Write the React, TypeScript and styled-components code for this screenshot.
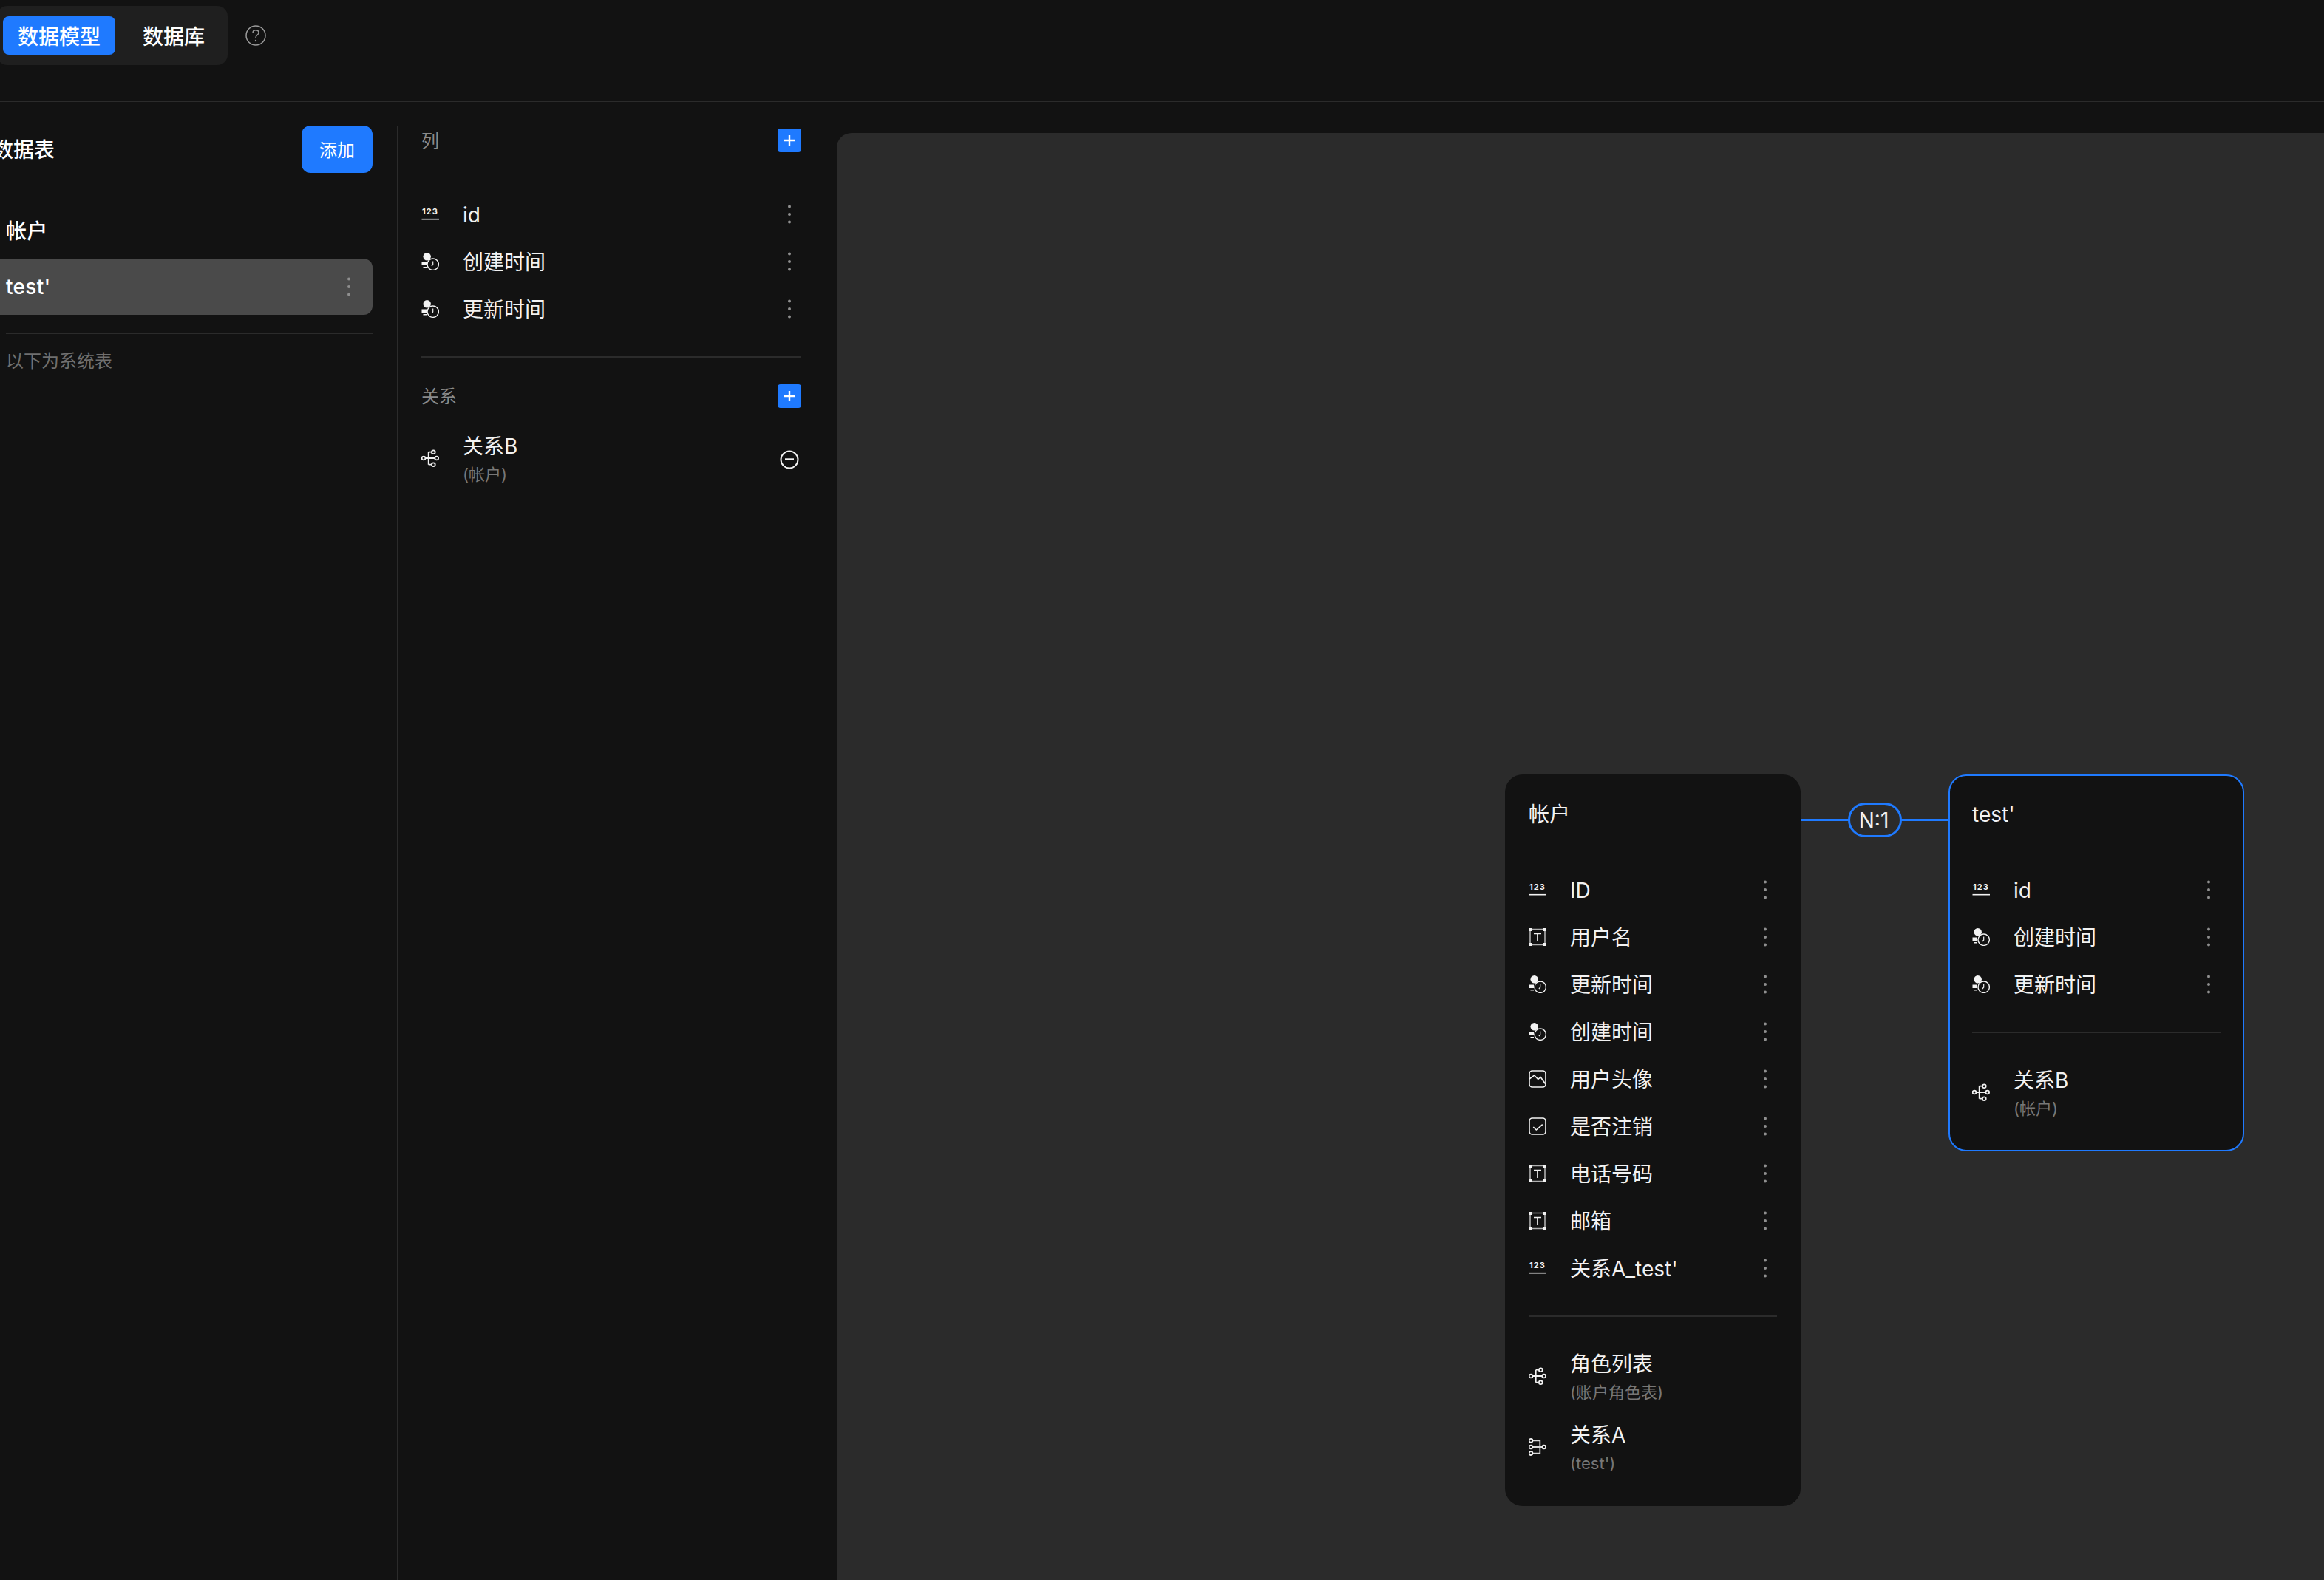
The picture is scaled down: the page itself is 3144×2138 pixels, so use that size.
import React from 'react';
import styled, { createGlobalStyle } from 'styled-components';

const Global = createGlobalStyle`
  html, body { margin: 0; padding: 0; background: #121212; overflow: hidden; }
  * { box-sizing: border-box; }
  body { font-family: Inter, "Noto Sans CJK SC", sans-serif; color: #f2f2f2; }
`;

const Page = styled.div`
  width: 3144px; height: 2138px; overflow: hidden; background: #121212;
  display: flex; flex-direction: column;
`;
const Header = styled.header`
  height: 138px; flex: none; border-bottom: 2px solid #2b2b2b;
  display: flex; align-items: flex-start; padding-top: 8px;
`;
const TabGroup = styled.div`
  margin-left: -4px; width: 312px; height: 80px; padding: 14px 8px;
  background: #1f1f1f; border-radius: 14px; display: flex; align-items: stretch; gap: 37px;
`;
const Tab = styled.div<{ $active?: boolean }>`
  display: flex; align-items: center; justify-content: center;
  font-size: 28px; font-weight: 500; color: #fff; border-radius: 8px;
  width: ${p => (p.$active ? '152px' : 'auto')};
  background: ${p => (p.$active ? '#1f7aff' : 'transparent')};
`;
const HelpWrap = styled.div`
  margin: 26px 0 0 24px; width: 28px; height: 28px; color: #9a9a9a;
`;
const Body = styled.div`flex: 1; display: flex; min-height: 0;`;
const Sidebar = styled.aside`
  width: 555px; flex: none; margin-left: -16px; margin-top: 32px; padding-right: 33px;
  border-right: 2px solid #2b2b2b;
`;
const SideHead = styled.div`
  display: flex; justify-content: space-between; align-items: center; padding-left: 6px; height: 64px;
  font-size: 28px; font-weight: 500; color: #fff;
`;
const SideTitle = styled.span`margin-top: -2px;`;
const AddButton = styled.button`
  width: 96px; height: 64px; border: 0; border-radius: 12px; background: #1f7aff; color: #fff;
  font-family: inherit; font-size: 24px; font-weight: 400; padding: 0 0 2px;
`;
const TableRow = styled.div<{ $active?: boolean; $first?: boolean }>`
  height: 76px; padding: 0 29px 0 24px; border-radius: 12px; margin-top: ${p => (p.$first ? '40px' : '0')};
  display: flex; align-items: center; justify-content: space-between;
  font-size: 28px; font-weight: 500; color: #fff; letter-spacing: 0.3px;
  background: ${p => (p.$active ? '#4a4a4a' : 'transparent')};
`;
const AccountName = styled.span`margin-top: -2px;`;
const SideRule = styled.div`height: 2px; background: #2b2b2b; margin: 24px 0 0 24px;`;
const SystemNote = styled.div`margin: 20px 0 0 24px; font-size: 24px; line-height: 34px; color: #6f6f6f;`;

const ColumnPanel = styled.section`
  width: 593px; flex: none; padding: 36px 48px 0 31px;
`;
const PanelHead = styled.div`
  height: 32px; display: flex; align-items: center; justify-content: space-between;
  font-size: 24px; color: #8a8a8a;
`;
const PanelTitle = styled.span`margin-top: -3px;`;
const PlusButton = styled.div`
  width: 32px; height: 32px; background: #1f7aff; border-radius: 4px;
  display: flex; align-items: center; justify-content: center;
`;
const RowList = styled.div<{ $top: number }>`margin-top: ${p => p.$top}px;`;
const FieldRow = styled.div`
  height: 64px; display: flex; align-items: center; font-size: 28px; color: #f2f2f2;
`;
const RelationRow = styled.div`
  height: 96px; display: flex; align-items: center;
`;
const IconBox = styled.div<{ $raise?: boolean }>`
  width: 24px; height: 24px; flex: none; margin-right: 32px; color: #f2f2f2;
  margin-top: ${p => (p.$raise ? '-4px' : '0')};
  svg { display: block; }
`;
const Label = styled.div`flex: 1; min-width: 0; line-height: 36px; padding-top: 1px;`;
const RelationText = styled.div`flex: 1; min-width: 0; padding-top: 2px;`;
const RelationName = styled.div`font-size: 28px; line-height: 38px; color: #f2f2f2;`;
const RelationSub = styled.div`font-size: 22px; line-height: 38px; color: #777;`;
const EndAction = styled.div`
  width: 32px; height: 32px; flex: none; display: flex; align-items: center; justify-content: center;
`;
const Rule = styled.div<{ $top: number; $bottom: number }>`
  height: 2px; background: #2b2b2b; margin: ${p => p.$top}px 0 ${p => p.$bottom}px;
`;

const Canvas = styled.main`
  flex: 1; margin-top: 42px; background: #2b2b2b; border-top-left-radius: 20px; position: relative;
`;
const Node = styled.div<{ $left: number; $selected?: boolean }>`
  position: absolute; left: ${p => p.$left}px; top: 868px; width: 400px;
  padding: 34px 30px 28px; background: #121212; border-radius: 24px;
  border: 2px solid ${p => (p.$selected ? '#1f7aff' : 'transparent')};
`;
const NodeTitle = styled.div`font-size: 28px; line-height: 36px; color: #f2f2f2; margin-bottom: 52px;`;
const Connector = styled.div`
  position: absolute; left: 1304px; top: 906px; width: 200px; height: 47px;
  display: flex; align-items: center; justify-content: center;
  &::before { content: ''; position: absolute; left: 0; right: 0; top: 22px; height: 3px; background: #1f7aff; }
`;
const Cardinality = styled.div`
  position: relative; width: 73px; height: 47px; border: 3px solid #1f7aff; border-radius: 24px; background: #2b2b2b;
  display: flex; align-items: center; justify-content: center; font-size: 28px; color: #f2f2f2; padding-right: 2px;
`;

const Svg: React.FC<{ children: React.ReactNode; size?: number }> = ({ children, size = 24 }) => (
  <svg width={size} height={size} viewBox={`0 0 ${size} ${size}`} fill="none" stroke="currentColor" strokeWidth="1.6">{children}</svg>
);

const NumberIcon = () => (
  <Svg>
    <text x="12" y="12" textAnchor="middle" fontFamily="Inter, sans-serif" fontSize="11" fontWeight="700" letterSpacing="1" fill="currentColor" stroke="none">123</text>
    <path d="M0.5 18.7H24" />
  </Svg>
);
const TextIcon = () => (
  <Svg>
    <path d="M2 1.5H22V22.5H2Z" stroke="#b0b0b0" />
    <path d="M7 7.5H17M12 7.5V18" strokeWidth="1.7" />
    <g fill="currentColor" stroke="none">
      <rect x="0" y="0" width="4" height="4" /><rect x="20" y="0" width="4" height="4" />
      <rect x="0" y="20" width="4" height="4" /><rect x="20" y="20" width="4" height="4" />
    </g>
  </Svg>
);
const TimeIcon = () => (
  <Svg>
    <circle cx="7.7" cy="5.2" r="5.2" fill="currentColor" stroke="none" />
    <path d="M0.5 12.5H7V17H0.5Z M2.5 19H7V20.4H2.5Z" fill="currentColor" stroke="none" />
    <circle cx="15.7" cy="15.7" r="7.7" fill="#121212" stroke="currentColor" strokeWidth="1.4" />
    <path d="M15.7 11.5V16L13.9 18" strokeWidth="1.2" />
  </Svg>
);
const ImageIcon = () => (
  <Svg>
    <rect x="1" y="1" width="22" height="22" rx="4" />
    <path d="M1 12L7.7 7L12.7 12.5L16.3 9.7L22.7 18.7" />
  </Svg>
);
const CheckIcon = () => (
  <Svg>
    <rect x="1" y="1" width="22" height="22" rx="4" />
    <path d="M6.3 13L10.3 17L18.7 9.7" />
  </Svg>
);
const SplitIcon = () => (
  <Svg>
    <path d="M5.7 12H18M9.7 3.7V20.7M9.7 3.7H13.6M9.7 20.7H13.6" strokeWidth="1.8" />
    <circle cx="3" cy="12" r="2.4" strokeWidth="1.8" /><circle cx="20.7" cy="12" r="2.4" strokeWidth="1.8" />
    <circle cx="16.3" cy="3.7" r="2.4" strokeWidth="1.8" /><circle cx="16.3" cy="20.7" r="2.4" strokeWidth="1.8" />
  </Svg>
);
const MergeIcon = () => (
  <Svg>
    <path d="M5.4 3.3H15.3V20.6H5.4M5.4 12H18.3" stroke="#d8d8d8" strokeWidth="1.8" />
    <circle cx="3" cy="3.3" r="2.4" strokeWidth="1.8" /><circle cx="3" cy="12" r="2.4" strokeWidth="1.8" />
    <circle cx="3" cy="20.6" r="2.4" strokeWidth="1.8" /><circle cx="20.7" cy="12" r="2.4" strokeWidth="1.8" />
  </Svg>
);
const Dots = () => (
  <svg width="6" height="28" viewBox="0 0 6 28" fill="#8f8f8f">
    <circle cx="3" cy="3.5" r="2" /><circle cx="3" cy="14" r="2" /><circle cx="3" cy="24.5" r="2" />
  </svg>
);
const Plus = () => (
  <svg width="14" height="14" viewBox="0 0 14 14" stroke="#fff" strokeWidth="2.4"><path d="M0 7H14M7 0V14" /></svg>
);
const MinusCircle = () => (
  <svg width="26" height="26" viewBox="0 0 26 26" fill="none" stroke="#f2f2f2" strokeWidth="2">
    <circle cx="13" cy="13" r="11.5" /><path d="M7 12.5H19" strokeWidth="2.4" />
  </svg>
);
const Help = () => (
  <svg width="28" height="28" viewBox="0 0 28 28" fill="none" stroke="currentColor" strokeWidth="1.5">
    <circle cx="14" cy="14" r="13" />
    <path d="M10 10.5C10 8 11.8 6.8 14 6.8C16.4 6.8 18 8.2 18 10.2C18 13.2 14 13.4 14 17" />
    <circle cx="14" cy="21" r="1.2" fill="currentColor" stroke="none" />
  </svg>
);

type Field = { name: string; icon: React.FC };
const baseFields: Field[] = [
  { name: 'id', icon: NumberIcon },
  { name: '创建时间', icon: TimeIcon },
  { name: '更新时间', icon: TimeIcon },
];
const accountFields: Field[] = [
  { name: 'ID', icon: NumberIcon },
  { name: '用户名', icon: TextIcon },
  { name: '更新时间', icon: TimeIcon },
  { name: '创建时间', icon: TimeIcon },
  { name: '用户头像', icon: ImageIcon },
  { name: '是否注销', icon: CheckIcon },
  { name: '电话号码', icon: TextIcon },
  { name: '邮箱', icon: TextIcon },
  { name: '关系A_test\'', icon: NumberIcon },
];

const FieldItem: React.FC<{ field: Field }> = ({ field }) => {
  const Icon = field.icon;
  return (
    <FieldRow>
      <IconBox><Icon /></IconBox>
      <Label>{field.name}</Label>
      <EndAction><Dots /></EndAction>
    </FieldRow>
  );
};
const RelationItem: React.FC<{ name: string; sub: string; icon: React.FC; action?: React.ReactNode }> = ({ name, sub, icon: Icon, action }) => (
  <RelationRow>
    <IconBox $raise><Icon /></IconBox>
    <RelationText>
      <RelationName>{name}</RelationName>
      <RelationSub>{sub}</RelationSub>
    </RelationText>
    {action && <EndAction>{action}</EndAction>}
  </RelationRow>
);

export default function App() {
  return (
    <Page>
      <Global />
      <Header>
        <TabGroup>
          <Tab $active>数据模型</Tab>
          <Tab>数据库</Tab>
        </TabGroup>
        <HelpWrap><Help /></HelpWrap>
      </Header>
      <Body>
        <Sidebar>
          <SideHead><SideTitle>数据表</SideTitle><AddButton>添加</AddButton></SideHead>
          <TableRow $first><AccountName>帐户</AccountName></TableRow>
          <TableRow $active>test'<Dots /></TableRow>
          <SideRule />
          <SystemNote>以下为系统表</SystemNote>
        </Sidebar>
        <ColumnPanel>
          <PanelHead><PanelTitle>列</PanelTitle><PlusButton><Plus /></PlusButton></PanelHead>
          <RowList $top={52}>
            {baseFields.map(f => <FieldItem key={f.name} field={f} />)}
          </RowList>
          <Rule $top={32} $bottom={36} />
          <PanelHead><PanelTitle>关系</PanelTitle><PlusButton><Plus /></PlusButton></PanelHead>
          <RowList $top={22}>
            <RelationItem name="关系B" sub="(帐户)" icon={SplitIcon} action={<MinusCircle />} />
          </RowList>
        </ColumnPanel>
        <Canvas>
          <Node $left={904}>
            <NodeTitle>帐户</NodeTitle>
            {accountFields.map(f => <FieldItem key={f.name + f.icon.name} field={f} />)}
            <Rule $top={32} $bottom={34} />
            <RelationItem name="角色列表" sub="(账户角色表)" icon={SplitIcon} />
            <RelationItem name="关系A" sub="(test')" icon={MergeIcon} />
          </Node>
          <Connector><Cardinality>N:1</Cardinality></Connector>
          <Node $left={1504} $selected>
            <NodeTitle>test'</NodeTitle>
            {baseFields.map(f => <FieldItem key={f.name} field={f} />)}
            <Rule $top={32} $bottom={34} />
            <RelationItem name="关系B" sub="(帐户)" icon={SplitIcon} />
          </Node>
        </Canvas>
      </Body>
    </Page>
  );
}
